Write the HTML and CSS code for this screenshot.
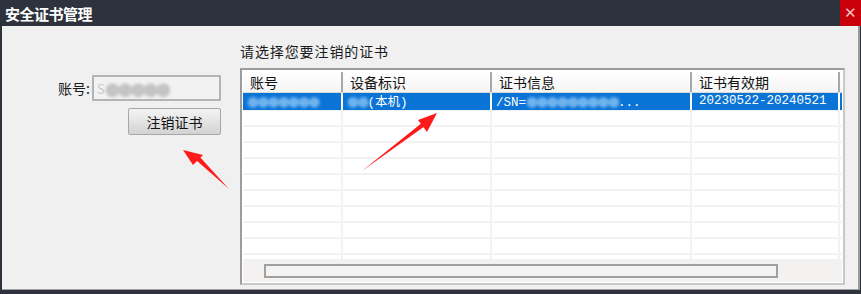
FILE: index.html
```html
<!DOCTYPE html>
<html lang="zh-CN">

<head>
    <meta charset="UTF-8">
    <meta name="viewport" content="width=device-width, initial-scale=1.0">
    <title>安全证书管理</title>
    <link rel="stylesheet" href="styles.css">
</head>

<body>
    <div class="window">
        <div class="titlebar">
            <span class="title">安全证书管理</span>
            <button class="close-btn">✕</button>
        </div>

        <div class="content">
            <div class="left-panel">
                <div class="account-row">
                    <span class="label">账号:</span>
                    <div class="account-box">S<span class="blur grey">●●●●●</span></div>
                </div>
                <button class="revoke-btn">注销证书</button>
            </div>

            <div class="right-panel">
                <div class="prompt">请选择您要注销的证书</div>
                <div class="listview">
                    <div class="list-head">
                        <div class="col c1">账号</div>
                        <div class="col c2">设备标识</div>
                        <div class="col c3">证书信息</div>
                        <div class="col c4">证书有效期</div>
                    </div>
                    <div class="list-body">
                        <div class="row selected">
                            <div class="col c1"><span class="blur light">●●●●●●●</span></div>
                            <div class="col c2"><span class="blur light">●●</span>(本机)</div>
                            <div class="col c3">/SN=<span class="blur light">●●●●●●●●●</span>...</div>
                            <div class="col c4">20230522-20240521</div>
                        </div>
                        <div class="row"><div class="col c1"></div><div class="col c2"></div><div class="col c3"></div><div class="col c4"></div></div>
                        <div class="row"><div class="col c1"></div><div class="col c2"></div><div class="col c3"></div><div class="col c4"></div></div>
                        <div class="row"><div class="col c1"></div><div class="col c2"></div><div class="col c3"></div><div class="col c4"></div></div>
                        <div class="row"><div class="col c1"></div><div class="col c2"></div><div class="col c3"></div><div class="col c4"></div></div>
                        <div class="row"><div class="col c1"></div><div class="col c2"></div><div class="col c3"></div><div class="col c4"></div></div>
                        <div class="row"><div class="col c1"></div><div class="col c2"></div><div class="col c3"></div><div class="col c4"></div></div>
                        <div class="row"><div class="col c1"></div><div class="col c2"></div><div class="col c3"></div><div class="col c4"></div></div>
                        <div class="row"><div class="col c1"></div><div class="col c2"></div><div class="col c3"></div><div class="col c4"></div></div>
                        <div class="row"><div class="col c1"></div><div class="col c2"></div><div class="col c3"></div><div class="col c4"></div></div>
                        <div class="row"><div class="col c1"></div><div class="col c2"></div><div class="col c3"></div><div class="col c4"></div></div>
                    </div>
                    <div class="hscroll">
                        <div class="thumb"></div>
                    </div>
                </div>
            </div>
        </div>

        <!-- 标注箭头 -->
        <svg class="arrows" width="861" height="294" viewBox="0 0 861 294">
            <path d="M229 189 L196 160 L199 156 Z" fill="#ff1a1a" />
            <path d="M183 150 L203 155 L193 165 Z" fill="#ff1a1a" />
            <path d="M362 171 L423 122 L425 126 Z" fill="#ff1a1a" />
            <path d="M437 113 L427 132 L418 120 Z" fill="#ff1a1a" />
        </svg>
    </div>
</body>

</html>
```

FILE: styles.css
```css
body {
    margin: 0;
    font-family: "Noto Sans CJK SC", "Liberation Sans", sans-serif;
    background-color: #2e323c;
}

.window {
    position: relative;
    width: 861px;
    height: 294px;
    overflow: hidden;
}

.titlebar {
    height: 26px;
    display: flex;
    align-items: center;
    justify-content: space-between;
    background-color: #2e323c;
}

.title {
    color: #ffffff;
    font-size: 15px;
    font-weight: bold;
    padding-left: 5px;
    letter-spacing: -0.5px;
}

.close-btn {
    width: 21px;
    height: 26px;
    border: none;
    padding: 0;
    background-color: #c9000c;
    color: #f4c0c0;
    font-size: 15px;
    line-height: 26px;
}

.content {
    display: flex;
    height: 263px;
    margin-left: 2px;
    margin-right: 1px;
    background-color: #f0f0f0;
    border-right: 2px solid #9a9a9a;
    border-bottom: 1px solid #a0a0a0;
}

.left-panel {
    width: 219px;
    display: flex;
    flex-direction: column;
    align-items: flex-end;
    padding-top: 49px;
}

.account-row {
    display: flex;
    align-items: center;
}

.label {
    font-size: 14px;
    color: #1a1a1a;
    margin-right: 2px;
}

.account-box {
    width: 122px;
    height: 22px;
    border: 2px solid #b4b4b4;
    background-color: #f2f2f2;
    display: flex;
    align-items: center;
    padding-left: 3px;
    overflow: hidden;
    font-size: 13px;
    color: #c8c8c8;
}

.revoke-btn {
    margin-top: 7px;
    width: 93px;
    height: 27px;
    border: 1px solid #a8a8a8;
    border-radius: 2px;
    background: linear-gradient(#f4f4f4, #e2e2e2 55%, #d2d2d2);
    font-family: "Noto Sans CJK SC", sans-serif;
    font-size: 14px;
    color: #111111;
    padding: 0;
}

.right-panel {
    display: flex;
    flex-direction: column;
    padding-left: 19px;
}

.prompt {
    font-size: 14px;
    color: #1a1a1a;
    letter-spacing: 0.9px;
    margin-top: 15px;
    height: 27px;
}

.listview {
    width: 599px;
    height: 211px;
    border: 2px solid #9c9c9c;
    border-right-color: #c8c8c8;
    border-bottom-color: #c8c8c8;
    background-color: #ffffff;
    display: flex;
    flex-direction: column;
    padding: 1px;
}

.list-head {
    display: flex;
    height: 20px;
    margin-top: 1px;
    background: linear-gradient(#ffffff, #f5f5f5);
    border-bottom: 1px solid #d8d8d8;
    font-size: 14px;
    color: #111111;
}

.list-head .col {
    border-right: 2px solid #a8a8a8;
    padding-left: 7px;
    line-height: 20px;
}

.col {
    box-sizing: border-box;
    white-space: nowrap;
    overflow: hidden;
}

.c1 { width: 100px; }
.c2 { width: 149px; }
.c3 { width: 200px; }
.c4 { width: 148px; }

.list-body {
    flex: 1;
    overflow: hidden;
}

.row {
    display: flex;
    height: 14px;
    border-bottom: 2px solid #f2f2f2;
}

.row:first-child {
    height: 17px;
    border-bottom-width: 1px;
}

.row .col {
    border-right: 2px solid #f2f2f2;
    padding-left: 4px;
    font-family: "Liberation Mono", "Noto Sans CJK SC", monospace;
    font-size: 12.5px;
    line-height: 17px;
}

.row .c4 {
    padding-left: 7px;
}

.row.selected {
    background-color: #0a74d6;
    color: #ffffff;
}

.row.selected .col {
    border-right-color: #ffffff;
}

.blur {
    filter: blur(1.5px);
    font-family: "DejaVu Sans", sans-serif;
    font-size: 14px;
    letter-spacing: -2px;
}

.blur.light {
    color: #6fb3ee;
}

.blur.grey {
    color: #c4c4c4;
    font-size: 18px;
    letter-spacing: -3px;
}

.hscroll {
    height: 23px;
    background-color: #f3f2f1;
    display: flex;
    align-items: center;
    padding-left: 21px;
}

.thumb {
    width: 510px;
    height: 10px;
    border: 2px solid #a0a0a0;
    background-color: #f4f3f2;
}

.arrows {
    position: absolute;
    left: 0;
    top: 0;
    pointer-events: none;
}
```
